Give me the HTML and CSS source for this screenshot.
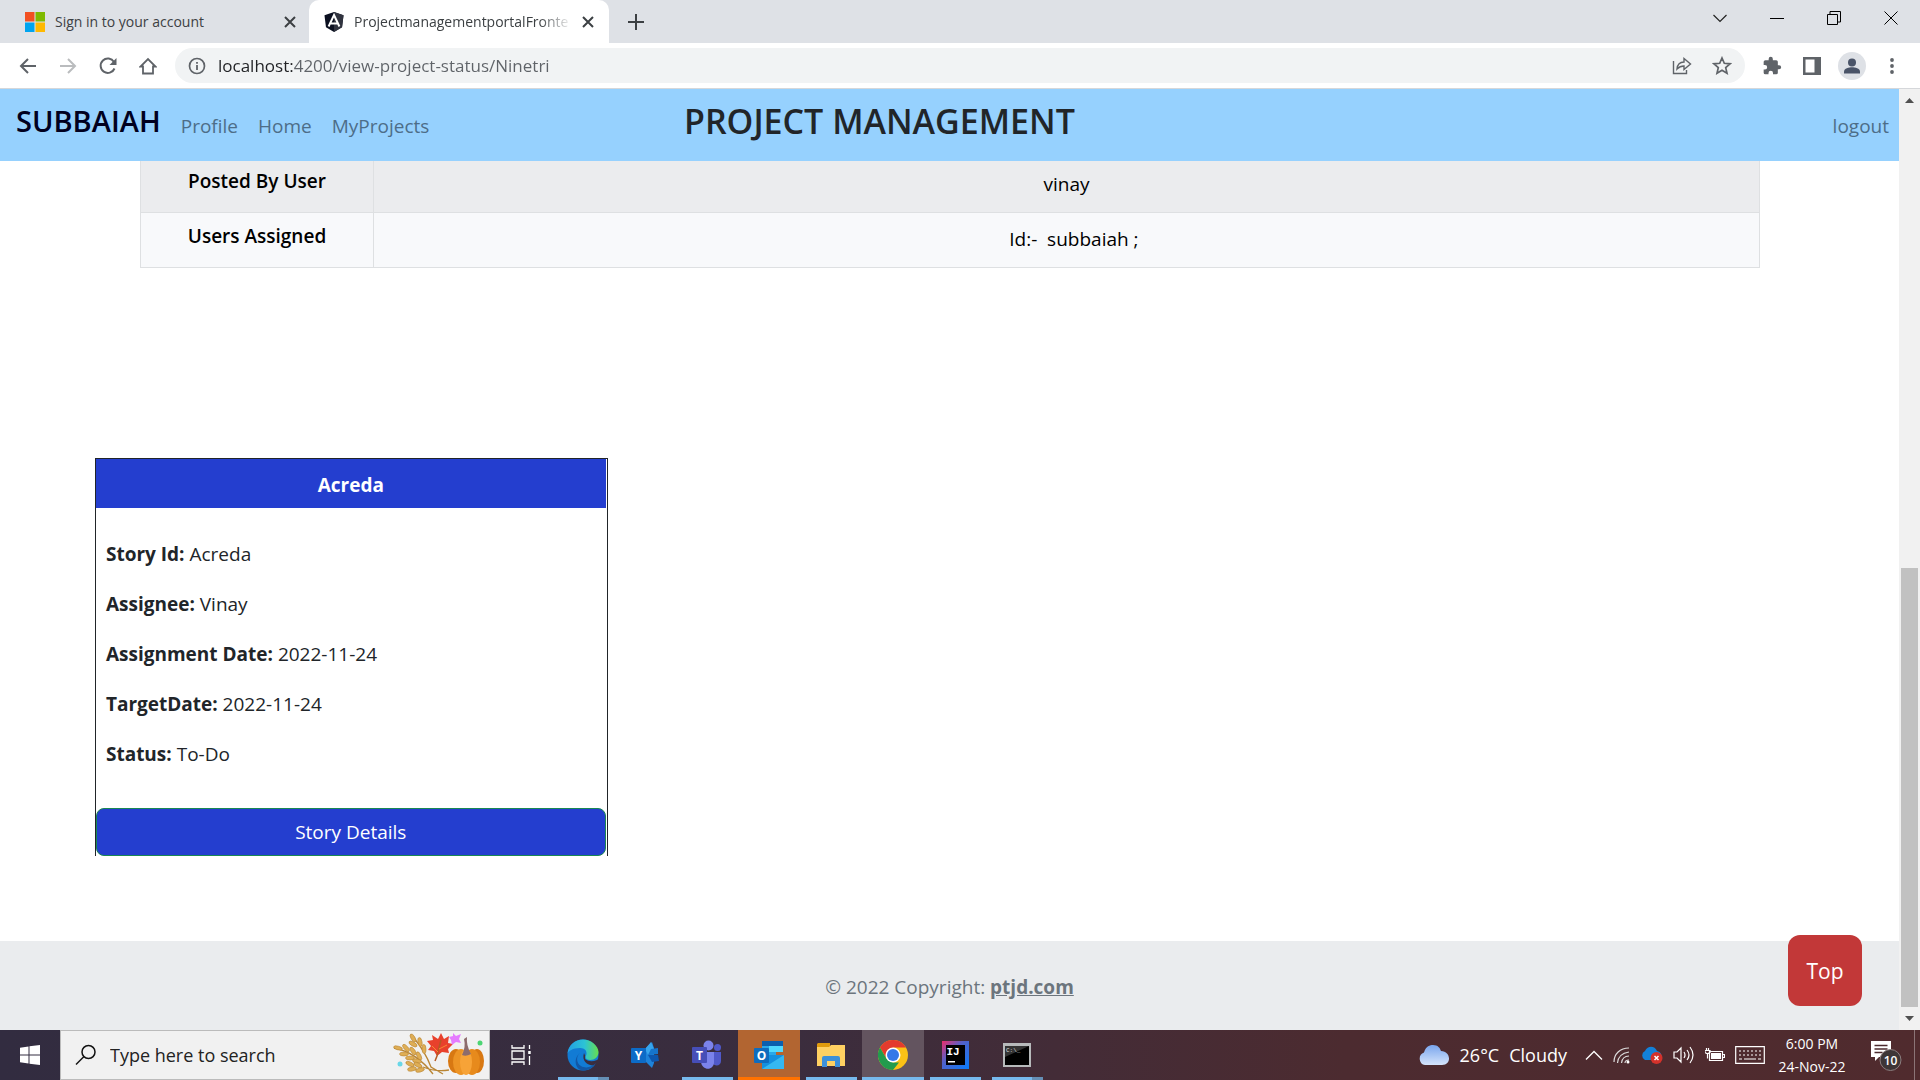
FILE: index.html
```html
<!DOCTYPE html>
<html lang="en">
<head>
<meta charset="utf-8">
<meta name="viewport" content="width=device-width, initial-scale=1">
<title>ProjectmanagementportalFrontend</title>
<link rel="stylesheet" href="styles.css">
</head>
<body>
<header class="browser">
  <div class="tabs">
    <div class="tab">
      <svg width="20" height="20" viewBox="0 0 20 20"><path fill="#f25022" d="M0 0h9.500v9.500H0z"/><path fill="#7fba00" d="M10.500 0H20v9.500h-9.500z"/><path fill="#00a4ef" d="M0 10.500h9.500V20H0z"/><path fill="#ffb900" d="M10.500 10.500H20V20h-9.500z"/></svg>
      <span class="tab-title">Sign in to your account</span>
      <button class="icon-btn" aria-label="Close tab"><svg width="12" height="12" viewBox="0 0 12 12"><path d="M1 1l10 10M11 1L1 11" stroke="#3c4043" stroke-width="2"/></svg></button>
    </div>
    <div class="tab active">
      <svg width="20" height="20" viewBox="0 0 20 20"><path fill="#0b1020" d="M10 0l9.500 3.200-1.500 12L10 20l-8-4.800L.5 3.200z"/><path fill="#30333f" d="M10 0l9.500 3.200-1.500 12L10 20z"/><path d="M4.600 14.500L10 3l5.400 11.500M6.800 11.500h6.400" fill="none" stroke="#fff" stroke-width="2"/></svg>
      <span class="tab-title fade">ProjectmanagementportalFronte</span>
      <button class="icon-btn" aria-label="Close tab"><svg width="12" height="12" viewBox="0 0 12 12"><path d="M1 1l10 10M11 1L1 11" stroke="#3c4043" stroke-width="2"/></svg></button>
    </div>
    <button class="icon-btn new-tab" aria-label="New tab"><svg width="16" height="16" viewBox="0 0 16 16"><path d="M8 0v16M0 8h16" stroke="#3c4043" stroke-width="2"/></svg></button>
    <div class="window-controls">
      <button class="icon-btn" aria-label="Search tabs"><svg width="14" height="14" viewBox="0 0 14 14"><path d="M.5 4L7 10.500 13.500 4" fill="none" stroke="#222" stroke-width="1.200"/></svg></button>
      <button class="icon-btn" aria-label="Minimize"><svg width="14" height="14" viewBox="0 0 14 14"><path d="M0 7.500h14" stroke="#000"/></svg></button>
      <button class="icon-btn" aria-label="Restore"><svg width="14" height="14" viewBox="0 0 14 14"><path d="M.5 3.500h10v10H.500zM3 3V.5h10.500V11H11" fill="none" stroke="#000"/></svg></button>
      <button class="icon-btn" aria-label="Close window"><svg width="14" height="14" viewBox="0 0 14 14"><path d="M.5.5l13 13M13.500.5l-13 13" stroke="#000"/></svg></button>
    </div>
  </div>
  <div class="toolbar">
    <button class="icon-btn nav" aria-label="Back"><svg width="18" height="18" viewBox="0 0 18 18"><path d="M17 9H2M9 2L2 9l7 7" fill="none" stroke="#5f6368" stroke-width="2"/></svg></button>
    <button class="icon-btn nav" aria-label="Forward"><svg width="18" height="18" viewBox="0 0 18 18"><path d="M1 9h15M9 2l7 7-7 7" fill="none" stroke="#babcbe" stroke-width="2"/></svg></button>
    <button class="icon-btn nav" aria-label="Reload"><svg width="18" height="18" viewBox="0 0 18 18"><path d="M15.500 11.500A7.200 7.200 0 1 1 15 5" fill="none" stroke="#5f6368" stroke-width="2"/><path fill="#5f6368" d="M17.500 1v7h-7z"/></svg></button>
    <button class="icon-btn nav" aria-label="Home"><svg width="18" height="18" viewBox="0 0 18 18"><path d="M4 16.500V9.500H1.500L9 2l7.500 7.500H14v7z" fill="none" stroke="#5f6368" stroke-width="1.800"/></svg></button>
    <div class="omnibox">
      <svg width="18" height="18" viewBox="0 0 18 18"><circle cx="9" cy="9" r="7.500" fill="none" stroke="#5f6368" stroke-width="1.700"/><path d="M9 8v5M9 5v1.800" stroke="#5f6368" stroke-width="1.800"/></svg>
      <input class="url" type="text" aria-label="Address" value="localhost:4200/view-project-status/Ninetri">
      <button class="icon-btn" aria-label="Share"><svg width="20" height="20" viewBox="0 0 20 20"><path d="M1.500 5v12.500h13V14M5 13c.5-5 3-7 7-7V2.500L18.500 8 12 13.500V10c-3 0-5 1-7 3z" fill="none" stroke="#5f6368" stroke-width="1.400"/></svg></button>
      <button class="icon-btn" aria-label="Bookmark"><svg width="20" height="20" viewBox="0 0 20 20"><path d="M10 2l2.300 5.300 5.700.5-4.300 3.800 1.300 5.600-5-3-5 3 1.300-5.600L2 7.800l5.700-.5z" fill="none" stroke="#5f6368" stroke-width="1.700"/></svg></button>
    </div>
    <div class="tools">
      <button class="icon-btn" aria-label="Extensions"><svg width="20" height="20" viewBox="0 0 24 24"><path fill="#5f6368" d="M20.500 11H19V7a2 2 0 0 0-2-2h-4V3.500a2.500 2.500 0 0 0-5 0V5H4a2 2 0 0 0-2 2v3.800h1.500a2.700 2.700 0 0 1 0 5.400H2V20a2 2 0 0 0 2 2h3.800v-1.500a2.700 2.700 0 0 1 5.400 0V22H17a2 2 0 0 0 2-2v-4h1.500a2.500 2.500 0 0 0 0-5z"/></svg></button>
      <button class="icon-btn" aria-label="Side panel"><svg width="18" height="18" viewBox="0 0 18 18"><path fill="#5f6368" fill-rule="evenodd" d="M0 0h18v18H0zM2.500 2.500v13h9v-13z"/></svg></button>
      <button class="icon-btn avatar" aria-label="Profile"><svg width="28" height="28" viewBox="0 0 28 28"><circle cx="14" cy="14" r="14" fill="#dee1e6"/><circle cx="14" cy="10.500" r="4" fill="#4a5468"/><path fill="#4a5468" d="M6 21.500v-2c0-3 5-4.300 8-4.300s8 1.300 8 4.300v2z"/></svg></button>
      <button class="icon-btn" aria-label="Menu"><svg width="18" height="18" viewBox="0 0 18 18" fill="#5f6368"><circle cx="9" cy="3" r="1.900"/><circle cx="9" cy="9" r="1.900"/><circle cx="9" cy="15" r="1.900"/></svg></button>
    </div>
  </div>
</header>

<div class="viewport">
  <div class="page">
    <nav class="navbar">
      <div class="nav-left">
        <a class="brand" href="#">SUBBAIAH</a>
        <a href="#">Profile</a>
        <a href="#">Home</a>
        <a href="#">MyProjects</a>
      </div>
      <h1>PROJECT MANAGEMENT</h1>
      <a class="logout" href="#">logout</a>
    </nav>
    <main>
      <table class="details">
        <tr><th scope="row">Posted By User</th><td>vinay</td></tr>
        <tr><th scope="row">Users Assigned</th><td>&nbsp;&nbsp;&nbsp;Id:-&nbsp; subbaiah ;</td></tr>
      </table>
      <section class="story">
        <h2>Acreda</h2>
        <div class="story-body">
          <p><b>Story Id:</b> Acreda</p>
          <p><b>Assignee:</b> Vinay</p>
          <p><b>Assignment Date:</b> 2022-11-24</p>
          <p><b>TargetDate:</b> 2022-11-24</p>
          <p><b>Status:</b> To-Do</p>
        </div>
        <button class="story-btn">Story Details</button>
      </section>
    </main>
    <footer>© 2022 Copyright: <a href="#">ptjd.com</a></footer>
    <button class="top-btn">Top</button>
  </div>
  <div class="scrollbar">
    <svg width="9" height="5" viewBox="0 0 9 5"><path fill="#505050" d="M0 5L4.500 0 9 5z"/></svg>
    <div class="track"><div class="thumb"></div></div>
    <svg width="9" height="5" viewBox="0 0 9 5"><path fill="#505050" d="M0 0l4.500 5L9 0z"/></svg>
  </div>
</div>

<div class="taskbar">
  <button class="icon-btn start" aria-label="Start"><svg width="20" height="20" viewBox="0 0 20 20" fill="#fff"><path d="M0 2.800L8.500 1.500v8H0zM9.500 1.300L20 0v9.500H9.500zM0 10.500h8.500v8L0 17.200zM9.500 10.500H20V20L9.500 18.700z"/></svg></button>
  <div class="search">
    <svg width="22" height="22" viewBox="0 0 22 22"><circle cx="13.500" cy="8" r="6.500" fill="none" stroke="#111" stroke-width="1.500"/><path d="M9 12.500L1 20.500" stroke="#111" stroke-width="1.500"/></svg>
    <input type="text" aria-label="Search" placeholder="Type here to search">
    <svg width="92" height="44" viewBox="0 0 92 44">
      <g stroke="#b98534" stroke-width="1.300" fill="none"><path d="M1 15q22 4 39 26M20 4q12 14 18 30l12 7M30 34q12 5 26 3"/></g>
      <g fill="#dfae55" stroke="#b98534" stroke-width=".6">
        <ellipse cx="5" cy="15" rx="4.500" ry="1.800" transform="rotate(15 5 15)"/><ellipse cx="13" cy="15" rx="4.500" ry="2" transform="rotate(50 13 15)"/><ellipse cx="11" cy="21" rx="4.500" ry="2"/><ellipse cx="20" cy="18" rx="4.500" ry="2" transform="rotate(55 20 18)"/><ellipse cx="17" cy="25" rx="4.500" ry="2"/><ellipse cx="26" cy="23" rx="4.500" ry="2" transform="rotate(65 26 23)"/><ellipse cx="24" cy="28" rx="4.500" ry="2" transform="rotate(10 24 28)"/>
        <ellipse cx="20" cy="5" rx="4.500" ry="2" transform="rotate(60 20 5)"/><ellipse cx="20" cy="11" rx="4.500" ry="2" transform="rotate(30 20 11)"/><ellipse cx="27" cy="9" rx="4.500" ry="2" transform="rotate(80 27 9)"/><ellipse cx="31" cy="16" rx="4.500" ry="2" transform="rotate(88 31 16)"/>
        <ellipse cx="17" cy="31" rx="4.500" ry="2" transform="rotate(25 17 31)"/><ellipse cx="25" cy="32" rx="4.500" ry="2" transform="rotate(30 25 32)"/><ellipse cx="19" cy="36" rx="4.500" ry="2" transform="rotate(-10 19 36)"/><ellipse cx="27" cy="37" rx="4.500" ry="2" transform="rotate(-15 27 37)"/>
      </g>
      <path fill="#e8412c" d="M48 0l3 6 5-3-1 7 5 1-5 5 1 4-7-1-5 4-3-5-6-1 3-4-4-5 6-1-1-5 6 4z"/><path d="M48 7l-4 16-2 5" fill="none" stroke="#b45a24" stroke-width="1.500"/><path d="M45 19l-6-6M46 16l8-4" stroke="#f88a32" fill="none"/>
      <path fill="#e57bff" d="M60 0l3 3 5-2-2 5 2 4-5-1-4 3-1-5-2-3 4-1z"/>
      <ellipse cx="63" cy="28" rx="8" ry="12" fill="#d87812"/><ellipse cx="84" cy="28" rx="7" ry="12" fill="#d87812"/><ellipse cx="68" cy="29" rx="8" ry="13" fill="#ed9425"/><ellipse cx="79" cy="29" rx="8" ry="13" fill="#e78a1c"/><ellipse cx="73" cy="29" rx="6" ry="13" fill="#f7a337"/>
      <path d="M69 22q4-8 2-16l3-2q-1 8 4 17-5 3-9 1z" fill="#8d6c6c"/>
      <circle cx="87" cy="10" r="2.500" fill="#4cd573"/><circle cx="7" cy="31" r="2.500" fill="#69d7e8"/>
    </svg>
  </div>
  <div class="apps">
    <button class="app" aria-label="Task view"><svg width="20" height="20" viewBox="0 0 20 20" fill="none" stroke="#fff" stroke-width="1.300"><path d="M1 0v3h12V0M1 20v-3h12v3M1 6h12v8H1zM18.500 0v4M18.500 11v9"/><path d="M17.200 6h2.500v3h-2.500z" fill="#fff" stroke="none"/></svg></button>
    <button class="app running stacked" aria-label="Edge"><svg width="32" height="32" viewBox="0 0 32 32"><defs><linearGradient id="eg"><stop offset="0" stop-color="#239fe4"/><stop offset=".55" stop-color="#2cc3d5"/><stop offset="1" stop-color="#67df4d"/></linearGradient></defs><circle cx="16" cy="16" r="15.500" fill="#127bd4"/><path fill="#3a2d3e" d="M17 14q2 3 1 6 5 4 12 1l2-1v5l-2 1c-8 2-16-3-13-12z"/><path fill="url(#eg)" d="M.5 15C1 6 8 .5 16 .5S31.500 7 31.500 13c0 5-4 8-8 8-3 0-5-1-5-3 0-1 1-1 1-4 0-4-4-5-7-5C6 9 1 12 .5 15z"/><path fill="#1257a5" d="M13 14c-4 3-4 10 1 13s11 1 15-3c-3 5-8 7.500-13 7.500C8 31 6 19 13 14z"/></svg></button>
    <button class="app" aria-label="Yammer"><svg width="28" height="28" viewBox="0 0 28 28"><path fill="#1e83da" d="M14 8l7-7 2 6v15l-2 5-7-7z"/><path fill="#37a5ed" d="M14 8l6-7 3 7-6 6z"/><path fill="#1674cc" d="M20 8l7-1v6l-10 1z"/><path fill="#0d56ae" d="M17 14h10l1 6-7 1z"/><rect y="7" width="15" height="15" rx="1" fill="#0c6bc7"/><text x="7.500" y="19" text-anchor="middle" class="logo-letter">Y</text></svg></button>
    <button class="app running" aria-label="Teams"><svg width="30" height="30" viewBox="0 0 30 30"><circle cx="16.500" cy="5.500" r="5" fill="#7b83eb"/><circle cx="25.500" cy="7.500" r="3.500" fill="#5059c9"/><path fill="#5059c9" d="M20 12h9v9c0 5-6 6-9 2z"/><path fill="#7b83eb" d="M9 12h13v10c0 9-12 9-13 0z"/><rect y="7" width="15" height="16" rx="1" fill="#464eb8"/><text x="7.500" y="20" text-anchor="middle" class="logo-letter">T</text></svg></button>
    <button class="app running alert" aria-label="Outlook"><svg width="30" height="30" viewBox="0 0 30 30"><path fill="#0b5fae" d="M8 1h21v8H8z"/><path fill="#28a8ea" d="M8 6h14v11H8z"/><path fill="#50d9ff" d="M15 6h14v6H15z"/><path fill="#1490df" d="M8 15l21 0v14H8z"/><path fill="#35b8f1" d="M8 29l22-14v14z"/><rect y="8" width="15" height="15" rx="1" fill="#0f6cbd"/><text x="7.500" y="20" text-anchor="middle" class="logo-letter">O</text></svg></button>
    <button class="app running" aria-label="File Explorer"><svg width="28" height="26" viewBox="0 0 28 26"><path fill="#e09b0d" d="M1 1h12v5H0V2z"/><path fill="#ffd162" d="M0 5h12l2-2h14v21H0z"/><path fill="#3d90d9" d="M5 25v-9q0-2 2-2h14q2 0 2 2v9h-5v-6h-8v6z"/></svg></button>
    <button class="app running current" aria-label="Chrome"><svg width="30" height="30" viewBox="0 0 30 30"><circle cx="15" cy="15" r="15" fill="#fbc116"/><path fill="#e33b2e" d="M2 7.500a15 15 0 0 1 26 0H15l-6.500 11z"/><path fill="#229b4d" d="M2 7.500l6.500 11.300 6.500 3.700h6L15 30A15 15 0 0 1 2 7.500z"/><circle cx="15" cy="15" r="7.500" fill="#fff"/><circle cx="15" cy="15" r="6" fill="#3478e8"/></svg></button>
    <button class="app running" aria-label="IntelliJ IDEA"><svg width="27" height="28" viewBox="0 0 27 28"><defs><linearGradient id="ij" x2="1" y2="1"><stop offset="0" stop-color="#ee2d6b"/><stop offset=".4" stop-color="#5361c9"/><stop offset="1" stop-color="#087cfa"/></linearGradient></defs><path fill="url(#ij)" d="M0 0h27v28H0z"/><path d="M4 4h19v20H4z"/><path fill="#fff" d="M6 20h7v1.500H6z"/><text x="11" y="14" text-anchor="middle" class="logo-mono">IJ</text></svg></button>
    <button class="app running stacked" aria-label="Command Prompt"><svg width="28" height="24" viewBox="0 0 28 24"><path fill="#b7babb" d="M0 0h28v24H0z"/><path d="M2 3h24v19H2z"/><path fill="#333" d="M2 3h24L2 14z"/><text x="3" y="9" class="logo-tiny">C:\_</text></svg></button>
  </div>
  <div class="tray">
    <div class="weather"><svg width="32" height="22" viewBox="0 0 32 22"><defs><linearGradient id="cl" x2="0" y2="1"><stop offset="0" stop-color="#79a5ed"/><stop offset="1" stop-color="#d5e4fb"/></linearGradient></defs><path fill="url(#cl)" d="M7 21a6.500 6.500 0 0 1-1-12.500C8 2 12 1 15 1c5 0 7 3 8 6 10 0 11 14 1 14z"/></svg><span>26°C</span><span>Cloudy</span></div>
    <div class="status">
      <svg width="18" height="12" viewBox="0 0 18 12"><path d="M1 10.500l8-8 8 8" fill="none" stroke="#fff" stroke-width="1.300"/></svg>
      <svg width="18" height="18" viewBox="0 0 18 18" fill="none" stroke="#ddd" stroke-width="1.200"><path d="M1 16C1 8 7 2 16 2M4.500 17C5 11 9 7 16 6M8.500 17c.5-4 3-7 7.500-7M12 17c0-2 1.500-3 4-3"/><circle cx="15" cy="16" r="1.500" fill="#fff" stroke="none"/></svg>
      <svg width="22" height="18" viewBox="0 0 22 18"><path fill="#1381d9" d="M4 14a5 5 0 0 1 0-9C7-1 14 0 16 5c6 1 6 9 1 9z"/><circle cx="15.500" cy="12" r="6" fill="#d4322b"/><path d="M13.500 10l4 4m0-4l-4 4" stroke="#fff" stroke-width="1.500"/></svg>
      <svg width="22" height="18" viewBox="0 0 22 18" fill="none" stroke="#fff" stroke-width="1.200"><path d="M1 6h3l4-4v14l-4-4H1zM11 6q2 3 0 6M14 4q4 5 0 10M17 1q6 8 0 16"/></svg>
      <svg width="20" height="16" viewBox="0 0 20 16"><path d="M4.500 4.500h13v9h-13zM17.500 7.500h2v3h-2M2.500 7v4.500M0 3.500h5v2q-2 2-5 0zM1.500 1v2M3.500 1v2" fill="none" stroke="#fff" stroke-width="1.200"/><path fill="#fff" d="M6 6h10v6H6z"/></svg>
      <svg width="30" height="18" viewBox="0 0 30 18" fill="none" stroke="#fff" stroke-width="1.200"><path d="M.7.7h28.600v16.600H.7z"/><path d="M4 5h22M4 9h22" stroke-dasharray="2 2"/><path d="M4 13h3m2 0h12m2 0h3"/></svg>
    </div>
    <div class="clock"><time>6:00 PM</time><time>24-Nov-22</time></div>
    <button class="icon-btn notice" aria-label="Notifications"><svg width="32" height="32" viewBox="0 0 32 32"><path fill="#fff" d="M0 2h20v16H8l-4 4v-4H0z"/><path d="M3.500 6.500h13M3.500 10h13M3.500 13.500h8" stroke="#4c2a2e" stroke-width="1.300"/><circle cx="19.500" cy="21" r="10.500" fill="#3e3637" stroke="#8b7d7e"/><text x="19.500" y="26" text-anchor="middle" class="count">10</text></svg></button>
  </div>
</div>
</body>
</html>
```
FILE: styles.css
```css
* { box-sizing: border-box; }
body {
  margin: 0;
  height: 100vh;
  display: flex;
  flex-direction: column;
  overflow: hidden;
  font: 19px/30px "Open Sans", "Noto Sans", sans-serif;
  color: #212529;
  background: #fff;
}
svg { display: block; flex: none; }
button, input { font: inherit; color: inherit; }
h1, h2, p { margin: 0; }
.icon-btn {
  display: flex;
  align-items: center;
  justify-content: center;
  flex: none;
  padding: 0;
  border: 0;
  background: none;
}

/* Browser chrome */
.tabs {
  display: flex;
  height: 43px;
  background: #dee1e6;
}
.tab {
  display: flex;
  align-items: center;
  gap: 10px;
  width: 300px;
  padding: 0 15px;
  font-size: 14px;
  color: #3c4043;
}
.tab:first-child { width: 309px; padding: 0 13px 0 25px; }
.tab.active { background: #fff; border-radius: 10px 10px 0 0; }
.tab-title { flex: 1; overflow: hidden; white-space: nowrap; }
.fade { mask-image: linear-gradient(to right, #000 85%, transparent); }
.new-tab { width: 54px; }
.window-controls { display: flex; margin-left: auto; padding: 0 1px 7px 0; }
.window-controls .icon-btn { width: 57px; }
.toolbar {
  display: flex;
  align-items: center;
  height: 46px;
  padding: 0 8px;
  border-bottom: 1px solid #d5d7da;
}
.nav { width: 40px; }
.omnibox {
  display: flex;
  align-items: center;
  gap: 20px;
  flex: 1;
  height: 35px;
  margin-left: 7px;
  padding: 0 13px;
  border-radius: 18px;
  background: #f1f3f4;
}
.url {
  flex: 1;
  min-width: 0;
  margin-left: -8px;
  padding: 0;
  border: 0;
  font-size: 17px;
  background: linear-gradient(to right, #202124 76px, #5f6368 76px);
  background-clip: text;
  color: transparent;
}
.tools { display: flex; margin-left: 7px; }
.tools .icon-btn { width: 40px; }

/* Web page */
.viewport { display: flex; flex: 1; min-height: 0; }
.page {
  position: relative;
  display: flex;
  flex-direction: column;
  flex: 1;
  overflow: hidden;
}
.navbar {
  z-index: 1;
  display: grid;
  grid-template-columns: 684px 1fr auto;
  height: 72px;
  padding: 12px 10px 12px 0;
  background: #96d1fe;
}
.nav-left { display: flex; gap: 20px; padding-left: 16px; }
.navbar a { padding-top: 10px; color: #4d6d88; text-decoration: none; }
.navbar .brand { padding-top: 5px; font-size: 29px; font-weight: 600; color: #000020; }
.navbar h1 { font-size: 34px; line-height: 40px; font-weight: 600; }
main { flex: 1; margin-top: -4px; }
.details {
  width: calc(100% - 279px);
  margin: 0 139px 0 140px;
  border-collapse: collapse;
  table-layout: fixed;
  text-align: center;
  color: #000;
}
.details th, .details td {
  height: 55px;
  padding: 8px 9px 10px;
  border: 1px solid #dee0e2;
}
.details th { width: 233px; padding-bottom: 16px; font-weight: 600; }
.details tr:nth-child(odd) { background: #ebecee; }
.details tr:nth-child(even) { background: #f8f9fb; }
.story {
  width: 27%;
  margin: 190px 0 0 5%;
  padding-right: 1px;
  border: solid #212529;
  border-width: 1px 1px 0;
}
.story h2 {
  padding: 11px 0 8px;
  background: #243ecf;
  color: #fff;
  font-size: 19px;
  line-height: 30px;
  text-align: center;
}
.story-body {
  display: flex;
  flex-direction: column;
  gap: 20px;
  padding: 31px 10px 39px;
}
.story-btn {
  display: block;
  width: 100%;
  height: 48px;
  padding: 0;
  border: 1px solid #198754;
  border-radius: 8px;
  background: #243ecf;
  color: #fff;
}
footer {
  height: 89px;
  padding-top: 31px;
  background: #eaecee;
  color: #6c757d;
  text-align: center;
}
footer a { color: inherit; font-weight: 700; }
.top-btn {
  position: absolute;
  right: 37px;
  bottom: 24px;
  width: 74px;
  height: 71px;
  padding: 0;
  border: 0;
  border-radius: 12px;
  background: #c23838;
  color: #fff;
  font-size: 21px;
}
.scrollbar {
  display: flex;
  flex-direction: column;
  align-items: center;
  gap: 9px;
  width: 21px;
  padding: 9px 0;
  background: #f1f1f1;
}
.track { display: flex; flex-direction: column; justify-content: flex-end; flex: 1; }
.thumb { width: 17px; height: 49%; background: #c1c1c1; }

/* Taskbar */
.taskbar {
  display: flex;
  height: 50px;
  color: #fff;
  background: linear-gradient(to right, #322c40, #3a2d3e 40%, #4c2b30 70%, #502b2e);
}
.start { width: 60px; }
.search {
  display: flex;
  align-items: center;
  gap: 13px;
  width: 430px;
  padding: 0 4px 0 14px;
  border: 1px solid #bbb;
  background: #f1f1f1;
}
.search input {
  flex: 1;
  min-width: 0;
  padding: 0;
  border: 0;
  background: none;
  font-size: 18px;
}
.search input::placeholder { color: #222; opacity: 1; }
.apps { display: flex; }
.app {
  display: flex;
  align-items: center;
  justify-content: center;
  width: 62px;
  padding: 0;
  border: 0;
  background: bottom / 51px 3px no-repeat;
}
.running { background-image: linear-gradient(#76b9ed, #76b9ed); }
.stacked { background-image: linear-gradient(to right, #76b9ed 40px, #658fb5 40px); }
.alert { background-color: #b26531; background-image: linear-gradient(#ff7200, #ff7200); background-size: 100% 3px; }
.current { background-color: #63545f; background-size: 100% 3px; }
.logo-letter { font: 700 12px "Open Sans", sans-serif; fill: #fff; }
.logo-mono { font: 700 11px "Liberation Mono", monospace; fill: #fff; }
.logo-tiny { font: 6px "Liberation Mono", monospace; fill: #ddd; }
.tray { display: flex; align-items: center; margin-left: auto; padding-right: 5px; }
.weather { display: flex; align-items: center; gap: 10px; margin-right: 18px; font-size: 18px; }
.status { display: flex; align-items: center; gap: 10px; }
.clock {
  display: flex;
  flex-direction: column;
  width: 94px;
  font-size: 14px;
  line-height: 23px;
  text-align: center;
}
.notice { width: 56px; height: 50px; border-right: 1px solid #8b7476; }
.count { font: 600 12px "Open Sans", sans-serif; fill: #fff; }
```
